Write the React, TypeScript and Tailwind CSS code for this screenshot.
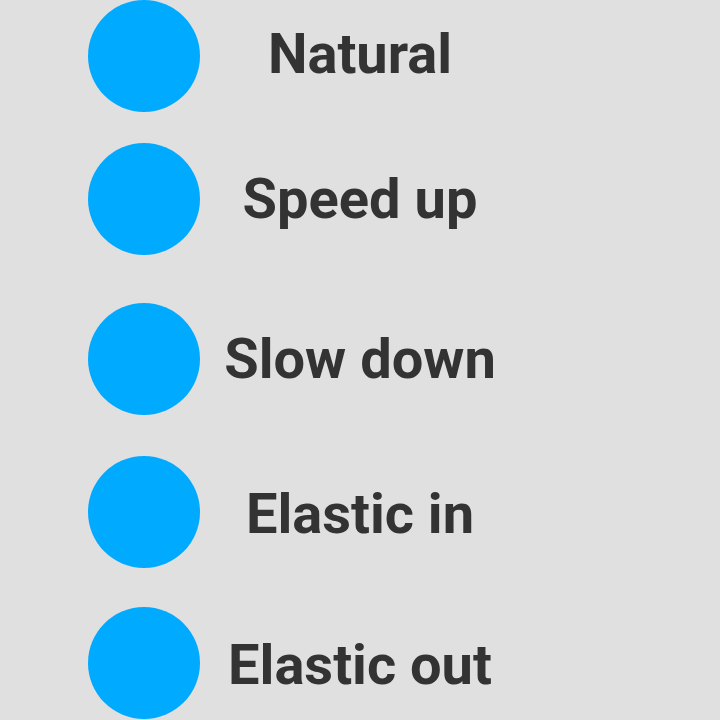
import React from "react";

const rows = [
  { label: "Natural", mt: "mt-0", shift: "-translate-y-[2px]" },
  { label: "Speed up", mt: "mt-[31px]", shift: "translate-y-0" },
  { label: "Slow down", mt: "mt-[48px]", shift: "translate-y-0" },
  { label: "Elastic in", mt: "mt-[41px]", shift: "translate-y-[2px]" },
  { label: "Elastic out", mt: "mt-[39px]", shift: "translate-y-[2px]" },
];

export default function App() {
  return (
    <div
      className="w-[720px] h-[720px] overflow-hidden bg-[#e0e0e0] flex flex-col"
      style={{ fontFamily: "Roboto, 'Liberation Sans', sans-serif" }}
    >
      {rows.map((r) => (
        <div key={r.label} className={`grid h-[112px] shrink-0 ${r.mt}`}>
          <div className="col-start-1 row-start-1 ml-[88px] w-[112px] h-[112px] rounded-full bg-[#00aaff] self-center justify-self-start" />
          <div
            className={`col-start-1 row-start-1 self-center justify-self-center text-[56px] leading-[66px] font-bold text-[#333333] whitespace-nowrap ${r.shift}`}
          >
            {r.label}
          </div>
        </div>
      ))}
    </div>
  );
}
